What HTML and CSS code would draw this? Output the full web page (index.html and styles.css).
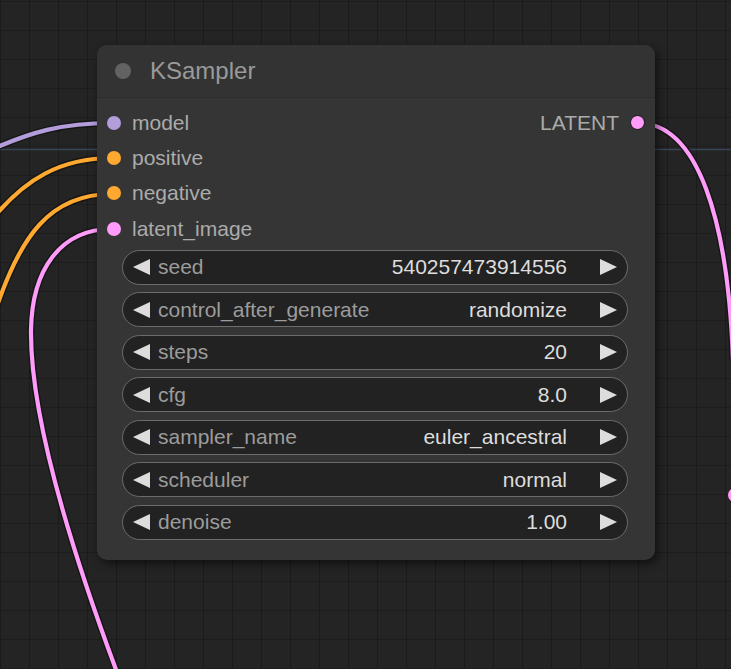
FILE: index.html
```html
<!DOCTYPE html>
<html lang="en">
  <head>
    <meta charset="UTF-8" />
    <meta name="viewport" content="width=device-width, initial-scale=1.0" />
    <title>KSampler</title>
    <link rel="stylesheet" href="styles.css">
  </head>
  <body>
    <div class="canvas">
      <!-- links between nodes -->
      <svg class="links" width="731" height="669" viewBox="0 0 731 669">
        <line x1="0" y1="149.5" x2="731" y2="149.5" class="group-line" />
        <g class="link-outline">
          <path d="M112 123 C60 123 30 133 -5 148" />
          <path d="M112 158 C60 158 25 180 -5 216" />
          <path d="M112 194 C50 194 20 236 -5 312" />
          <path d="M112 229 C60 229 32 270 31 330 C30 420 75 560 118 675" />
          <path d="M638 123 C698 123 728 220 733 360" />
        </g>
        <path class="link model" d="M112 123 C60 123 30 133 -5 148" />
        <path class="link cond" d="M112 158 C60 158 25 180 -5 216" />
        <path class="link cond" d="M112 194 C50 194 20 236 -5 312" />
        <path class="link latent" d="M112 229 C60 229 32 270 31 330 C30 420 75 560 118 675" />
        <path class="link latent" d="M638 123 C698 123 728 220 733 360" />
        <circle cx="735" cy="495" r="7" class="far-slot" />
      </svg>

      <div class="node">
        <div class="node-title">
          <span class="title-dot"></span>
          <span class="title-text">KSampler</span>
        </div>

        <div class="slots">
          <div class="slot-row">
            <div class="slot">
              <span class="dot model-dot"></span>model
            </div>
            <div class="slot out">
              LATENT<span class="dot latent-dot linked"></span>
            </div>
          </div>
          <div class="slot-row">
            <div class="slot"><span class="dot cond-dot"></span>positive</div>
          </div>
          <div class="slot-row">
            <div class="slot"><span class="dot cond-dot"></span>negative</div>
          </div>
          <div class="slot-row">
            <div class="slot"><span class="dot latent-dot"></span>latent_image</div>
          </div>
        </div>

        <div class="widgets">
          <div class="widget">
            <span class="arrow-left"></span>
            <span class="w-label">seed</span>
            <span class="w-value">540257473914556</span>
            <span class="arrow-right"></span>
          </div>
          <div class="widget">
            <span class="arrow-left"></span>
            <span class="w-label">control_after_generate</span>
            <span class="w-value">randomize</span>
            <span class="arrow-right"></span>
          </div>
          <div class="widget">
            <span class="arrow-left"></span>
            <span class="w-label">steps</span>
            <span class="w-value">20</span>
            <span class="arrow-right"></span>
          </div>
          <div class="widget">
            <span class="arrow-left"></span>
            <span class="w-label">cfg</span>
            <span class="w-value">8.0</span>
            <span class="arrow-right"></span>
          </div>
          <div class="widget">
            <span class="arrow-left"></span>
            <span class="w-label">sampler_name</span>
            <span class="w-value">euler_ancestral</span>
            <span class="arrow-right"></span>
          </div>
          <div class="widget">
            <span class="arrow-left"></span>
            <span class="w-label">scheduler</span>
            <span class="w-value">normal</span>
            <span class="arrow-right"></span>
          </div>
          <div class="widget">
            <span class="arrow-left"></span>
            <span class="w-label">denoise</span>
            <span class="w-value">1.00</span>
            <span class="arrow-right"></span>
          </div>
        </div>
      </div>
    </div>
  </body>
</html>
```

FILE: styles.css
```css
* {
  box-sizing: border-box;
  margin: 0;
  padding: 0;
}

body {
  width: 731px;
  height: 669px;
  overflow: hidden;
  background-color: #232323;
  font-family: "Liberation Sans", Arial, sans-serif;
}

.canvas {
  position: relative;
  width: 731px;
  height: 669px;
  background-color: #242424;
  background-image:
    repeating-linear-gradient(90deg, rgba(0, 0, 0, 0.25) 0 1px, transparent 1px 29px),
    repeating-linear-gradient(0deg, rgba(0, 0, 0, 0.2) 0 1px, transparent 1px 29px);
}

.links {
  position: absolute;
  left: 0;
  top: 0;
}

.group-line {
  stroke: rgba(70, 95, 125, 0.55);
  stroke-width: 1.5;
}

.link-outline path {
  fill: none;
  stroke: #161616;
  stroke-width: 7;
}

.link {
  fill: none;
  stroke-width: 4.2;
}

.link.model {
  stroke: #b39ddb;
}

.link.cond {
  stroke: #ffa931;
}

.link.latent {
  stroke: #ff9cf9;
}

.far-slot {
  fill: #ff9cf9;
}

/* node */
.node {
  position: absolute;
  left: 97px;
  top: 45px;
  width: 558px;
  background-color: #353535;
  border-radius: 10px;
  box-shadow: 3px 4px 10px rgba(0, 0, 0, 0.55);
  padding-bottom: 20px;
}

.node-title {
  height: 53px;
  display: flex;
  align-items: center;
  padding-left: 18px;
  background-color: #333333;
  border-radius: 10px 10px 0 0;
  border-bottom: 1px solid #2c2c2c;
}

.title-dot {
  width: 16px;
  height: 16px;
  border-radius: 50%;
  background-color: #626262;
  margin-right: 19px;
}

.title-text {
  font-size: 24px;
  color: #9a9a9a;
}

.slots {
  padding-top: 7px;
}

.slot-row {
  height: 35.4px;
  display: flex;
  justify-content: space-between;
  align-items: center;
  padding: 0 10px;
}

.slot {
  display: flex;
  align-items: center;
  font-size: 21px;
  color: #ababab;
}

.dot {
  width: 14px;
  height: 14px;
  border-radius: 50%;
  margin-right: 11px;
}

.slot.out .dot {
  margin-right: 0;
  margin-left: 11px;
}

.model-dot {
  background-color: #b39ddb;
}

.cond-dot {
  background-color: #ffa931;
}

.latent-dot {
  background-color: #ff9cf9;
}

.dot.linked {
  border: 1.5px solid #111;
  width: 15px;
  height: 15px;
}

.widgets {
  margin-top: 3px;
  padding: 0 27px 0 25px;
  display: flex;
  flex-direction: column;
  gap: 7.5px;
}

.widget {
  height: 35px;
  display: flex;
  align-items: center;
  padding: 0 10px;
  background-color: #222222;
  border: 1.5px solid #6c6c6c;
  border-radius: 18px;
  font-size: 21px;
}

.arrow-left {
  width: 0;
  height: 0;
  border-top: 8px solid transparent;
  border-bottom: 8px solid transparent;
  border-right: 17px solid #dddddd;
}

.arrow-right {
  width: 0;
  height: 0;
  border-top: 8px solid transparent;
  border-bottom: 8px solid transparent;
  border-left: 17px solid #dddddd;
  margin-left: 33px;
}

.w-label {
  flex: 1;
  margin-left: 8px;
  color: #9c9c9c;
}

.w-value {
  color: #dddddd;
}
```
